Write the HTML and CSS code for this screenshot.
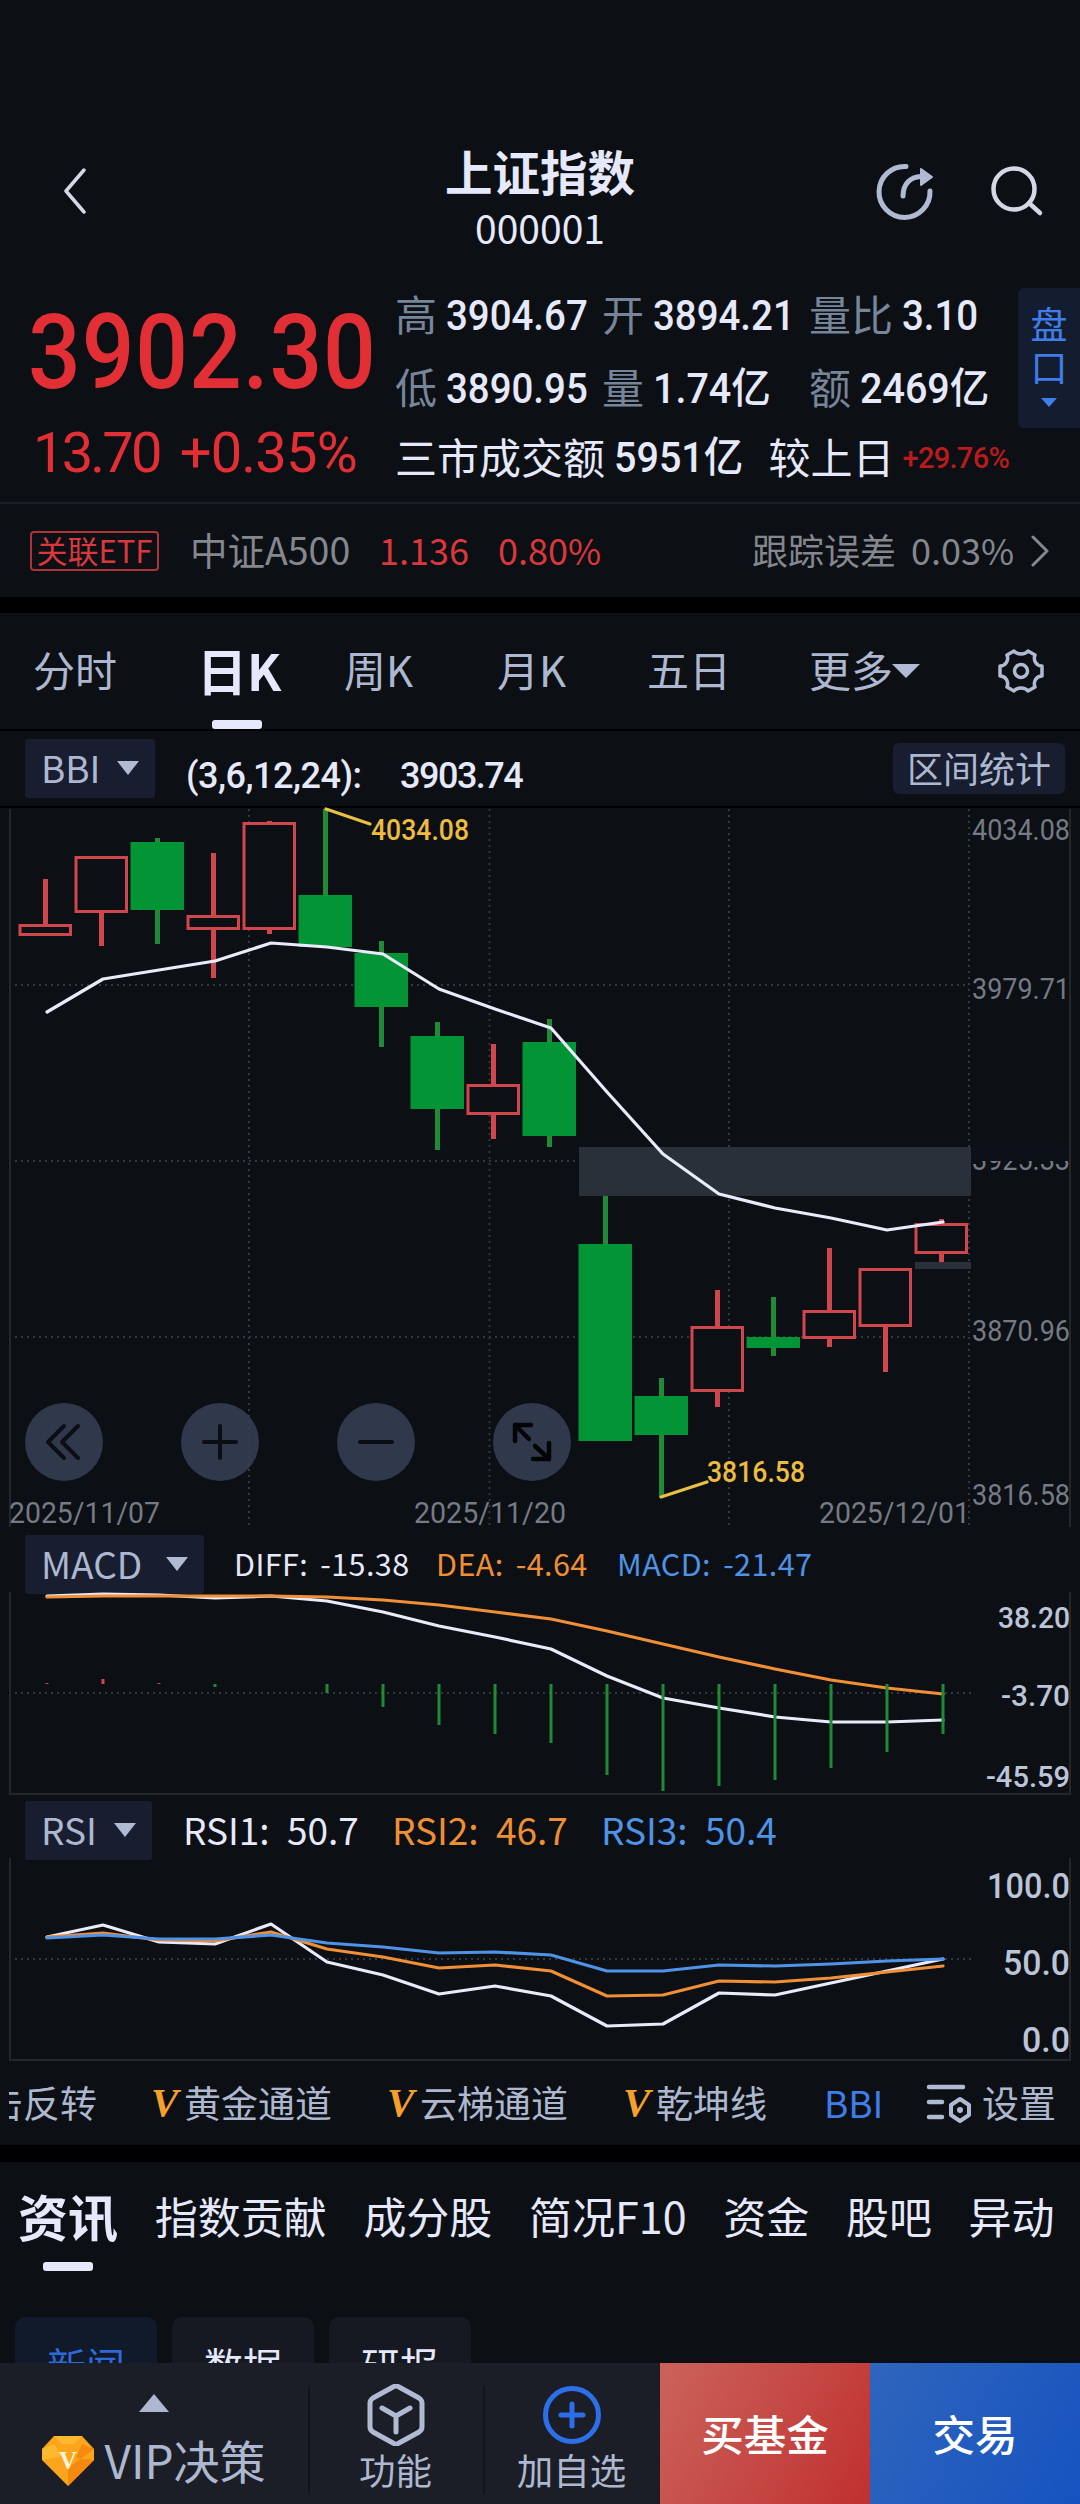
FILE: index.html
```
<!DOCTYPE html>
<html lang="zh-CN">
<head>
	<meta charset="UTF-8">
	<title>上证指数</title>
	<link rel="stylesheet" href="styles.css">
</head>
<body>
	<header class="top">
		<svg class="back" width="24" height="46" viewBox="0 0 24 46"><path d="M21 2L3 23l18 21"/></svg>
		<div class="title">
			<h1>上证指数</h1>
			<p>000001</p>
		</div>
		<svg class="share" width="60" height="60" viewBox="0 0 60 60">
			<path d="M31 4.500A25.500 25.500 0 1 0 55 29"/>
			<path d="M28 34C28 22 35 15 46 14.500"/>
			<path class="tip" d="M46 7l11 8-11 8z"/>
		</svg>
		<svg class="search" width="54" height="54" viewBox="0 0 54 54"><circle cx="24" cy="24" r="20.500"/><path d="M39 38l11 10"/></svg>
	</header>

	<section class="quote">
		<div class="price">
			<div class="now num">3902.30</div>
			<div class="change num"><span>13.70</span><span class="rate">+0.35%</span></div>
		</div>
		<div class="stats">
			<div><label>高</label><b class="num">3904.67</b></div>
			<div><label>开</label><b class="num">3894.21</b></div>
			<div><label>量比</label><b class="num">3.10</b></div>
			<div><label>低</label><b class="num">3890.95</b></div>
			<div><label>量</label><b class="num yi">1.74亿</b></div>
			<div><label>额</label><b class="num yi">2469亿</b></div>
			<div class="total"><span>三市成交额</span><b class="num yi">5951亿</b><span class="vs">较上日</span><i class="num">+29.76%</i></div>
		</div>
		<div class="pankou"><span>盘</span><span>口</span><em class="tri"></em></div>
	</section>

	<section class="etf">
		<span class="tag">关联ETF</span>
		<span class="name">中证A500</span>
		<span class="up">1.136</span>
		<span class="up">0.80%</span>
		<span class="diff">跟踪误差 0.03%</span>
		<svg width="18" height="32" viewBox="0 0 18 32"><path d="M2 2l14 14L2 30"/></svg>
	</section>

	<nav class="period">
		<a>分时</a>
		<a class="on">日K</a>
		<a>周K</a>
		<a>月K</a>
		<a>五日</a>
		<a class="more">更多<em class="tri"></em></a>
		<svg width="46" height="46" viewBox="0 0 46 46">
			<path d="M16 3c3 4 11 4 14 0l7 4c-2 5 1 11 7 11v10c-6 0-9 6-7 11l-7 4c-3-4-11-4-14 0l-7-4c2-5-1-11-7-11V18c6 0 9-6 7-11z"/>
			<circle cx="23" cy="23" r="6.5"/>
		</svg>
	</nav>

	<div class="ind bbi">
		<span class="pick">BBI<em class="tri"></em></span>
		<span class="num p1">(3,6,12,24):</span>
		<span class="num p2">3903.74</span>
		<span class="range">区间统计</span>
	</div>
	<div class="chart">
		<svg id="kline" width="1080" height="727" viewBox="0 808 1080 727"></svg>
		<div class="tools">
			<a><svg width="36" height="36" viewBox="0 0 36 36"><path d="M18 2L2 18l16 16M32 2L16 18l16 16"/></svg></a>
			<a><svg width="36" height="36" viewBox="0 0 36 36"><path d="M18 2v32M2 18h32"/></svg></a>
			<a><svg width="36" height="36" viewBox="0 0 36 36"><path d="M2 18h32"/></svg></a>
			<a><svg class="full" width="42" height="42" viewBox="0 0 42 42"><path d="M18 18L4 4M4 20V4h16M24 25l14 13M38 22v16H22"/></svg></a>
		</div>
	</div>

	<div class="ind macd">
		<span class="pick">MACD<em class="tri"></em></span>
		<span class="white">DIFF: -15.38</span>
		<span class="orange">DEA: -4.64</span>
		<span class="blue">MACD: -21.47</span>
	</div>
	<svg id="macd" class="sub" width="1080" height="207" viewBox="0 1594 1080 207"></svg>

	<div class="ind rsi">
		<span class="pick">RSI<em class="tri"></em></span>
		<span class="white">RSI1: 50.7</span>
		<span class="orange">RSI2: 46.7</span>
		<span class="blue">RSI3: 50.4</span>
	</div>
	<svg id="rsi" class="sub" width="1080" height="202" viewBox="0 1860 1080 202"></svg>

	<div class="switch">
		<div class="first"><span>击反转</span></div>
		<span class="vip"><i>V</i>黄金通道</span>
		<span class="vip"><i>V</i>云梯通道</span>
		<span class="vip"><i>V</i>乾坤线</span>
		<span class="cur">BBI</span>
		<svg width="46" height="40" viewBox="0 0 46 40">
			<path d="M3 4h34M3 19h13M3 34h13"/>
			<path class="nut" d="M34 16l9 6v10l-9 6-9-6V22z"/>
			<circle class="dot" cx="34" cy="27" r="3"/>
		</svg>
		<span class="set">设置</span>
	</div>

	<nav class="news">
		<a class="on">资讯</a>
		<a>指数贡献</a>
		<a>成分股</a>
		<a>简况F10</a>
		<a>资金</a>
		<a>股吧</a>
		<a>异动</a>
	</nav>
	<div class="chips">
		<span class="on">新闻</span>
		<span>数据</span>
		<span>研报</span>
	</div>

	<footer class="bar">
		<div class="decide">
			<em class="tri"></em>
			<div>
				<svg width="52" height="50" viewBox="0 0 52 50">
					<path d="M12 0h28l12 13v11L26 50 0 24V13z" fill="#fba51c"/>
					<path d="M12 0h28l-8 8H20zM0 13l12-5 8 12-20 4z" fill="#fdb92d"/>
					<path d="M52 13l-12-5-6 14 18 2L26 50V32z" fill="#f6890f"/>
					<text x="26" y="33" text-anchor="middle">V</text>
				</svg>
				<span>VIP决策</span>
			</div>
		</div>
		<div class="item">
			<svg width="58" height="62" viewBox="0 0 58 62"><path d="M26 3q3-2 6 0l20 11q3 2 3 5v24q0 3-3 5L32 59q-3 2-6 0L6 48q-3-2-3-5V19q0-3 3-5zM15 24l14 8 14-8M29 32v16"/></svg>
			<span>功能</span>
		</div>
		<div class="item add">
			<svg width="58" height="62" viewBox="0 0 58 62"><circle cx="29" cy="31" r="26.500"/><path d="M29 20v22M18 31h22"/></svg>
			<span>加自选</span>
		</div>
		<a class="buy">买基金</a>
		<a class="trade">交易</a>
	</footer>
	<script type="text/javascript" src="chart.js"></script>
</body>
</html>
```

FILE: styles.css
```
* {
	margin: 0;
	padding: 0;
	box-sizing: border-box;
}
body {
	width: 1080px;
	height: 2504px;
	overflow: hidden;
	background-color: #0c0f14;
	color: #e6e9fb;
	font-family: "Noto Sans CJK SC", sans-serif;
	line-height: 1;
}
svg {
	display: block;
	flex: none;
	fill: none;
	stroke: #b0bbd3;
	stroke-linecap: round;
	stroke-linejoin: round;
}
span, a, label, b, i {
	white-space: nowrap;
}
b, i {
	font-style: normal;
	font-weight: 500;
}
.num {
	font-family: Roboto, "Noto Sans CJK SC", sans-serif;
}
.tri {
	display: inline-block;
	border: 11px solid transparent;
	border-top: 14px solid #b0bbd3;
	border-bottom: 0;
}

/* 顶部 */
.top {
	display: flex;
	height: 279px;
	padding: 147px 36px 0 63px;
	align-items: flex-start;
}
.back {
	margin-top: 21px;
	stroke: #d4d8e4;
	stroke-width: 3.5;
}
.title {
	width: 300px;
	margin-left: 303px;
	text-align: center;
}
.title h1 {
	font-size: 47.5px;
	line-height: 48px;
}
.title p {
	margin-top: 13px;
	font-size: 39px;
	line-height: 39px;
}
.share {
	margin: 15px 0 0 185px;
	stroke-width: 5;
}
.share .tip {
	fill: #b0bbd3;
	stroke-width: 2;
}
.search {
	margin: 18px 0 0 55px;
	stroke: #d4d8e4;
	stroke-width: 4.5;
}

/* 报价 */
.quote {
	display: flex;
	height: 223px;
}
.price {
	width: 397px;
	padding: 22px 0 0 28px;
	color: #e12f35;
}
.now {
	font-size: 104px;
	font-weight: 500;
	line-height: 104px;
	letter-spacing: 1px;
	transform: scaleX(.893);
	transform-origin: 0 50%;
}
.change {
	display: flex;
	padding: 20px 0 0 5px;
	font-size: 56px;
	line-height: 56px;
	letter-spacing: -2.8px;
	gap: 20px;
}
.change .rate {
	letter-spacing: -.8px;
}
.stats {
	display: grid;
	width: 621px;
	grid-template-columns: 207px 207px 207px;
	grid-template-rows: 73px 73px 66px;
	font-size: 42px;
}
.stats > div {
	display: flex;
	align-items: center;
	gap: 7px;
}
/* 数字比默认字体窄 */
.stats b {
	margin-left: 2px;
	transform: scaleX(.915);
	transform-origin: 0 50%;
}
.stats b.yi {
	transform: scaleX(.94);
}
.stats label, .total span {
	margin: -5px 0 0 -2px;
}
.stats label {
	color: #77859b;
}
.stats .total {
	grid-column: 1 / 4;
}
.total .vs.vs {
	margin-left: 10px;
}
.total i {
	margin-left: 1px;
	color: #b91a1c;
	font-size: 29px;
	letter-spacing: -.7px;
}
.pankou {
	display: flex;
	flex-direction: column;
	align-items: center;
	width: 62px;
	height: 140px;
	margin-top: 9px;
	padding-top: 17px;
	border-radius: 6px 0 0 6px;
	background-color: #141d30;
	color: #3f7de8;
	font-size: 37px;
	gap: 6px;
}
.pankou .tri {
	margin-top: 7px;
	border-width: 9px 8px 0;
	border-top-color: #3f7de8;
}

/* ETF */
.etf {
	display: flex;
	align-items: center;
	height: 111px;
	padding: 0 30px;
	border-top: 2px solid #1b1e24;
	border-bottom: 16px solid #000;
	color: #84878e;
	font-size: 36px;
}
.etf .name, .etf .up, .etf .diff {
	margin-top: -4px;
}
.tag {
	width: 129px;
	height: 40px;
	border: 2px solid #ab3339;
	border-radius: 4px;
	color: #d9383c;
	font-size: 31px;
	line-height: 34px;
	text-align: center;
}
.etf .name {
	width: 189px;
	margin-left: 31px;
	font-size: 37.5px;
}
.etf .up {
	width: 119px;
	color: #d9383c;
}
.etf .diff {
	margin-left: 135px;
	word-spacing: 7px;
}
.etf svg {
	margin-left: 17px;
	stroke: #84878e;
	stroke-width: 3;
}

/* 周期 */
.period {
	display: flex;
	align-items: center;
	height: 118px;
	padding-left: 33px;
	border-bottom: 2px solid #000;
	color: #adb8d0;
	font-size: 42px;
}
.period a {
	width: 153px;
	margin-top: -4px;
}
.period a:first-child {
	width: 164px;
}
.period a.on {
	position: relative;
	width: 147px;
	color: #e6e9fb;
	font-size: 50px;
	font-weight: 700;
}
.period a.on::after {
	position: absolute;
	bottom: -35px;
	left: 15px;
	width: 50px;
	height: 9px;
	border-radius: 3px;
	background-color: #e6e9fb;
	content: "";
}
.period a:nth-child(5) {
	width: 162px;
	margin-left: -3px;
}
.period .more {
	display: flex;
	align-items: center;
	width: 189px;
}
.period .more .tri {
	margin: 3px 0 0 -1px;
	border-width: 14px 14px 0;
}
.period svg {
	stroke-width: 3.5;
}

/* 指标标题 */
.ind {
	display: flex;
	align-items: center;
	height: 59px;
	padding-left: 25px;
}
.pick {
	display: flex;
	align-items: center;
	justify-content: space-between;
	height: 59px;
	padding: 0 16px 2px;
	border-radius: 3px;
	background-color: #181e30;
	color: #adb8d0;
	font-size: 37px;
	letter-spacing: normal;
	word-spacing: normal;
}
.white { color: #e6e9fb; }
.orange { color: #ee8f35; }
.blue { color: #4f93e6; }

.bbi {
	height: 77px;
	border-bottom: 2px solid #000;
	font-size: 36px;
}
.bbi .pick {
	width: 130px;
}
.bbi .num {
	padding-top: 14px;
	font-weight: 500;
	letter-spacing: -1.5px;
}
.bbi .p1 {
	width: 214px;
	margin-left: 31px;
	letter-spacing: -.5px;
}
.range {
	width: 172px;
	height: 51px;
	margin-left: auto;
	margin-right: 15px;
	border-radius: 6px;
	background-color: #181e30;
	color: #adb8d0;
	line-height: 48px;
	text-align: center;
}

/* K线 */
.chart {
	position: relative;
	height: 727px;
}
.chart svg, .sub {
	overflow: visible;
}
.tools {
	position: absolute;
	top: 595px;
	left: 25px;
	display: flex;
	gap: 78px;
}
.tools a {
	display: flex;
	align-items: center;
	justify-content: center;
	width: 78px;
	height: 78px;
	border-radius: 50%;
	background-color: rgba(53, 63, 84, .88);
}
.tools svg {
	stroke: #0b0e14;
	stroke-width: 4;
}
.tools .full {
	stroke: #030406;
	stroke-width: 4.5;
}
.grid {
	stroke: #34373d;
	stroke-width: 2;
	stroke-dasharray: 2 4;
	stroke-linecap: butt;
}
.frame {
	stroke: #23262b;
	stroke-width: 2;
	stroke-linecap: butt;
}
.red { stroke: #cf474d; }
.green { stroke: #1f8a37; }
.box.red { stroke-width: 3; stroke-linejoin: miter; fill: #0c0f14; }
.box.green { stroke: none; fill: #039435; }
.wick { stroke-width: 5; stroke-linecap: butt; }
.stick { stroke-width: 3; stroke-linecap: butt; }
.line { stroke-width: 3.2; }
.line.w { stroke: #e9ebfb; }
.line.o { stroke: #f08f36; }
.line.b { stroke: #4f93e6; }
.line.y { stroke: #e9bf45; }
.gap { fill: #29303a; stroke: none; }
.veil { fill: #0c1018; stroke: none; }
svg text {
	stroke: none;
	font-family: Roboto, sans-serif;
}
.axis { fill: #757a85; font-size: 29px; }
.mark { fill: #ecbc41; font-size: 29px; font-weight: 500; }
.scale { fill: #bcc4d8; font-size: 30px; font-weight: 500; }
.scale.big { font-size: 35px; }

.macd {
	font-size: 30.5px;
	letter-spacing: .4px;
	word-spacing: 5px;
}
.macd .pick {
	width: 179px;
	margin-right: 30px;
}
.macd .white { width: 202px; }
.macd .orange { width: 181px; }
.macd > .white, .macd > .orange, .macd > .blue {
	margin-top: -2px;
}
.rsi {
	font-size: 37px;
	word-spacing: 9px;
}
.rsi .pick {
	width: 127px;
	margin-right: 31px;
}
.rsi > .white, .rsi > .orange {
	width: 209px;
}
.rsi > .white, .rsi > .orange, .rsi > .blue {
	margin-top: -2px;
}

/* 指标切换 */
.switch {
	display: flex;
	align-items: center;
	height: 100px;
	padding-left: 9px;
	border-bottom: 17px solid #000;
	color: #adb8d0;
	font-size: 37px;
}
.switch > span, .switch > div {
	margin-top: -3px;
}
.first {
	display: flex;
	justify-content: flex-end;
	width: 88px;
	margin-right: 54px;
	overflow: hidden;
}
.vip {
	display: flex;
	align-items: center;
	width: 236px;
}
.vip:nth-child(4) {
	width: 201px;
}
.vip i {
	width: 33px;
	color: #f5a02c;
	font: italic 700 41px "Liberation Serif", serif;
}
.switch .cur {
	width: 102px;
	color: #3f7de8;
}
.switch svg {
	margin: -2px 10px 0 0;
	stroke-width: 4.5;
}
.switch .nut {
	stroke-width: 4;
}
.switch .dot {
	fill: #b0bbd3;
	stroke: none;
}

/* 资讯 */
.news {
	display: flex;
	align-items: center;
	height: 110px;
	padding: 0 0 4px 18px;
	gap: 36.7px;
	font-size: 43px;
}
.news .on {
	position: relative;
	font-size: 50px;
	font-weight: 700;
}
.news .on::after {
	position: absolute;
	bottom: -31px;
	left: 25px;
	width: 50px;
	height: 9px;
	border-radius: 3px;
	background-color: #e6e9fb;
	content: "";
}
.chips {
	display: flex;
	height: 91px;
	padding: 45px 0 0 15px;
	overflow: hidden;
	gap: 15px;
}
.chips span {
	width: 142px;
	height: 96px;
	border-radius: 10px;
	background-color: #161922;
	font-size: 39px;
	line-height: 94px;
	text-align: center;
}
.chips .on {
	background-color: #101a2b;
	color: #2f69d8;
}

/* 底部 */
.bar {
	display: flex;
	height: 141px;
	background-color: #1b1e27;
	color: #adb8d0;
}
.decide {
	display: flex;
	flex-direction: column;
	align-items: center;
	width: 308px;
	padding-top: 31px;
}
.decide .tri {
	border: 15px solid transparent;
	border-top: 0;
	border-bottom: 18px solid #adb8d0;
}
.decide div {
	display: flex;
	align-items: center;
	margin-top: 24px;
	font-size: 46px;
	gap: 10px;
}
.decide div span {
	margin-top: -4px;
}
.decide svg {
	stroke: none;
}
.decide text {
	fill: #fff4d8;
	font: 700 25px "Liberation Serif", serif;
}
.item {
	position: relative;
	display: flex;
	flex-direction: column;
	align-items: center;
	width: 175px;
	padding-top: 21px;
	font-size: 36.5px;
	gap: 6px;
}
.item::before {
	position: absolute;
	top: 23px;
	left: 0;
	width: 2px;
	height: 108px;
	background-color: #12141b;
	content: "";
}
.item svg {
	stroke-width: 5;
}
.item + .add {
	width: 177px;
}
.add svg {
	stroke: #2d6fe8;
}
.buy, .trade {
	width: 210px;
	color: #fff;
	font-size: 42.5px;
	font-weight: 500;
	line-height: 140px;
	text-align: center;
}
.buy {
	background: linear-gradient(120deg, #cb635a, #c03030);
}
.trade {
	background: linear-gradient(120deg, #2f65bd, #1653c0);
}
```

FILE: chart.js
```
var NS = 'http://www.w3.org/2000/svg';

function add(id, tag, cls, attrs, text) {
	var el = document.createElementNS(NS, tag);
	el.setAttribute('class', cls);
	for (var k in attrs) {
		el.setAttribute(k, attrs[k]);
	}
	if (text) el.textContent = text;
	document.getElementById(id).appendChild(el);
}
function path(id, cls, d) {
	add(id, 'path', cls, { d: d });
}
function label(id, cls, x, y, len, text, end) {
	add(id, 'text', cls, {
		x: x, y: y, textLength: len, lengthAdjust: 'spacingAndGlyphs',
		'text-anchor': end ? 'end' : 'start'
	}, text);
}
//折线，每根K线间隔56
function line(id, cls, ys) {
	path(id, 'line ' + cls, 'M' + ys.map(function (y, i) {
		return (47 + i * 56) + ' ' + y;
	}).join('L'));
}

//网格
path('kline', 'grid', 'M249 809V1527M489.500 809V1527M729 809V1527M969 809V1527');
path('kline', 'grid', 'M15 985H969M15 1161H969M15 1337H969');
path('kline', 'frame', 'M10 809V1527M1070 809V1527');
add('kline', 'rect', 'gap', { x: 579, y: 1147, width: 392, height: 49 });
add('kline', 'rect', 'gap', { x: 915, y: 1262, width: 56, height: 7 });

//[颜色, 最高, 实体上, 实体下, 最低]
var candles = [
	['red', 879, 924, 936, 936], ['red', 856, 856, 913, 946],
	['green', 838, 842, 910, 944], ['red', 853, 915, 930, 978],
	['red', 821, 822, 930, 934], ['green', 809, 895, 947, 947],
	['green', 941, 953, 1007, 1047], ['green', 1022, 1036, 1109, 1150],
	['red', 1044, 1084, 1115, 1139], ['green', 1019, 1042, 1136, 1147],
	['green', 1196, 1244, 1441, 1441], ['green', 1378, 1396, 1435, 1497],
	['red', 1290, 1326, 1392, 1407], ['green', 1297, 1337, 1348, 1356],
	['red', 1248, 1310, 1339, 1347], ['red', 1268, 1268, 1327, 1372],
	['red', 1219, 1223, 1254, 1262]
];
candles.forEach(function (c, i) {
	var x = 45.5 + i * 56, p = c[0] == 'red' ? 1.5 : 0;
	path('kline', 'wick ' + c[0], 'M' + x + ' ' + c[1] + 'V' + c[2] + 'M' + x + ' ' + c[3] + 'V' + c[4]);
	add('kline', 'rect', 'box ' + c[0], {
		x: x - 27 + p, y: c[2] + p, width: 53.5 - 2 * p, height: c[3] - c[2] - 2 * p
	});
});
line('kline', 'w', [1012, 979, 970, 961, 943, 947, 954, 989, 1009, 1028, 1092, 1154, 1194, 1208, 1218, 1230, 1222]);

path('kline', 'line y', 'M326 809L370 824M661 1497L707 1482');
label('kline', 'mark', 371, 840, 98, '4034.08');
label('kline', 'mark', 707, 1482, 98, '3816.58');
label('kline', 'axis', 1070, 840, 98, '4034.08', 1);
label('kline', 'axis', 1070, 999, 98, '3979.71', 1);
label('kline', 'axis', 1070, 1170, 98, '3925.33', 1);
add('kline', 'rect', 'veil', { x: 972, y: 1147, width: 97, height: 14 });
label('kline', 'axis', 1070, 1341, 98, '3870.96', 1);
label('kline', 'axis', 1070, 1505, 98, '3816.58', 1);
label('kline', 'axis', 9, 1523, 151, '2025/11/07');
label('kline', 'axis', 414, 1523, 152, '2025/11/20');
label('kline', 'axis', 819, 1523, 151, '2025/12/01');

//MACD
path('macd', 'frame', 'M10 1592V1794H1070V1592');
path('macd', 'grid', 'M15 1693H972');
line('macd', 'w', [1596, 1594, 1595, 1598, 1596, 1601, 1612, 1626, 1637, 1649, 1676, 1698, 1708, 1717, 1722, 1722, 1720]);
line('macd', 'o', [1597, 1596, 1596, 1596, 1596, 1597, 1600, 1605, 1612, 1619, 1631, 1644, 1657, 1669, 1680, 1688, 1694]);
[1683, 1679, 1683, 1687, 1684, 1693, 1707, 1725, 1734, 1743, 1775, 1791, 1786, 1780, 1768, 1752, 1734].forEach(function (y, i) {
	path('macd', 'stick ' + (y < 1684 ? 'red' : 'green'), 'M' + (47 + i * 56) + ' 1684V' + y);
});
label('macd', 'scale', 1070, 1628, 72, '38.20', 1);
label('macd', 'scale', 1070, 1706, 69, '-3.70', 1);
label('macd', 'scale', 1070, 1787, 84, '-45.59', 1);

//RSI
path('rsi', 'frame', 'M10 1858V2060H1070V1858');
path('rsi', 'grid', 'M15 1959H972');
line('rsi', 'w', [1937, 1925, 1942, 1944, 1924, 1962, 1975, 1994, 1986, 1996, 2026, 2024, 1993, 1995, 1983, 1971, 1959]);
line('rsi', 'o', [1937, 1933, 1940, 1941, 1932, 1949, 1957, 1968, 1965, 1971, 1996, 1995, 1981, 1982, 1978, 1972, 1966]);
line('rsi', 'b', [1938, 1935, 1939, 1939, 1935, 1943, 1947, 1953, 1952, 1955, 1971, 1971, 1965, 1966, 1964, 1961, 1959]);
label('rsi', 'scale big', 1070, 1898, 83, '100.0', 1);
label('rsi', 'scale big', 1070, 1975, 67, '50.0', 1);
label('rsi', 'scale big', 1070, 2052, 48, '0.0', 1);
```
